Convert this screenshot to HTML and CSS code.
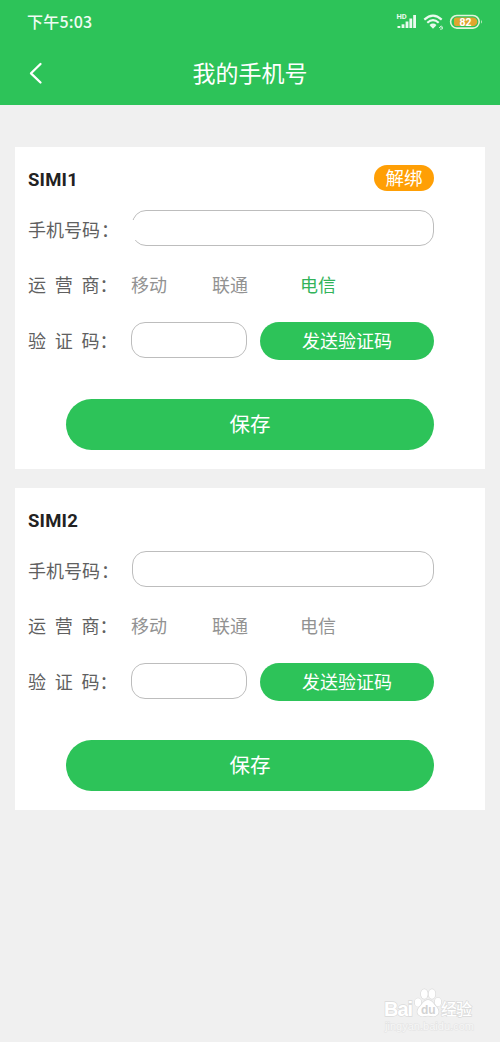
FILE: index.html
```html
<!DOCTYPE html>
<html lang="zh-CN">
<head>
<meta charset="utf-8">
<title>我的手机号</title>
<link rel="stylesheet" href="styles.css">
</head>
<body>
<header class="header">
  <div class="status">
    <span class="time">下午5:03</span>
    <svg class="status-icons" width="86" height="20" viewBox="0 0 86 20">
      <text class="hd" x="0.5" y="7">HD</text>
      <g fill="#eafaef">
        <rect x="1.5" y="14" width="2.8" height="2"/>
        <rect x="5.6" y="12.3" width="2.8" height="3.7"/>
        <rect x="9.6" y="9.5" width="2.8" height="6.5"/>
        <rect x="13.4" y="6.5" width="2.8" height="9.5"/>
        <rect x="17.2" y="3" width="2.8" height="13"/>
      </g>
      <g fill="none" stroke="#eafaef" stroke-width="2.1">
        <path d="M28.3 7.6Q37 -0.3 45.7 7.6"/>
        <path d="M31.3 10.8Q37 5.5 42.7 10.8"/>
        <path d="M34.2 13.8Q37 11.4 39.8 13.8"/>
      </g>
      <path d="M37 16.8l-2.4-2.6q2.4-1.8 4.8 0z" fill="#eafaef"/>
      <path d="M43 16l2.2-2.2v2.4M46.4 14.6v2.4l-2.4.2" fill="none" stroke="#c8f0d4" stroke-width="1"/>
      <rect x="54.6" y="3.5" width="28.6" height="12.6" rx="6.3" fill="none" stroke="#e2f5dc" stroke-width="1.6"/>
      <path d="M85 7.8q1.6 2 0 4z" fill="#e2f5dc"/>
      <path d="M60 5.5H77a4.3 4.3 0 0 1 0 8.6H60a2 2 0 0 1-2-2V7.5a2 2 0 0 1 2-2z" fill="#dfa52f"/>
      <text class="level" x="69.5" y="13.7">82</text>
    </svg>
  </div>
  <nav class="nav">
    <svg class="back" width="16" height="24" viewBox="0 0 16 24"><path d="M12.5 3L3 12.3L12.5 21.5" fill="none" stroke="#fff" stroke-width="2.3" stroke-linecap="round" stroke-linejoin="round"/></svg>
    <h1 class="title">我的手机号</h1>
  </nav>
</header>
<main class="cards">
  <section class="card">
    <div class="head"><h2 class="sim">SIMI1</h2><span class="unbind">解绑</span></div>
    <div class="row phone"><span class="label">手机号码<span class="colon">：</span></span><div class="field number open"></div></div>
    <div class="row carrier"><span class="label"><span class="spread">运营</span>商：</span><span class="option mobile">移动</span><span class="option unicom">联通</span><span class="option selected">电信</span></div>
    <div class="row code"><span class="label"><span class="spread">验证</span>码：</span><div class="field captcha"></div><div class="button send">发送验证码</div></div>
    <div class="button save">保存</div>
  </section>
  <section class="card">
    <div class="head"><h2 class="sim">SIMI2</h2></div>
    <div class="row phone"><span class="label">手机号码<span class="colon">：</span></span><div class="field number"></div></div>
    <div class="row carrier"><span class="label"><span class="spread">运营</span>商：</span><span class="option mobile">移动</span><span class="option unicom">联通</span><span class="option">电信</span></div>
    <div class="row code"><span class="label"><span class="spread">验证</span>码：</span><div class="field captcha"></div><div class="button send">发送验证码</div></div>
    <div class="button save">保存</div>
  </section>
</main>
<svg class="watermark" width="104" height="56" viewBox="0 0 104 56">
  <g class="mark">
    <text class="brand" x="2" y="32" textLength="29">Bai</text>
    <ellipse cx="36" cy="18.5" rx="3.2" ry="4.2"/>
    <ellipse cx="42.3" cy="10" rx="3.4" ry="4.8"/>
    <ellipse cx="50" cy="10" rx="3.4" ry="4.8"/>
    <ellipse cx="56" cy="18" rx="3.2" ry="4.2"/>
    <path d="M46 16c4 0 5.5 4 8 6.500s4.500 7.500-.5 9.500c-2.500 1-5-.3-7.500-.3s-5 1.300-7.500.3c-5-2-3-7-.5-9.500s4-6.500 8-6.500z"/>
    <text class="cjk" x="59" y="31" textLength="31">经验</text>
    <text class="url" x="3" y="46" textLength="89" lengthAdjust="spacingAndGlyphs">jingyan.baidu.com</text>
  </g>
  <text class="du" x="39" y="30">du</text>
</svg>
</body>
</html>
```

FILE: styles.css
```css
* { box-sizing: border-box; }
body {
  margin: 0;
  height: 1042px;
  position: relative;
  background: #f0f0f0;
  font-family: Roboto, "Noto Sans CJK SC", sans-serif;
}
.header {
  height: 105px;
  background: #2dc359;
  color: #fff;
}
.status {
  height: 44px;
  padding: 0 16px 0 27px;
  display: flex;
  align-items: center;
  justify-content: space-between;
}
.time {
  font: 500 16px/20px "Noto Sans CJK SC", sans-serif;
  letter-spacing: 0.2px;
  padding-bottom: 2px;
  color: #effcf3;
}
.status-icons { margin-right: 2px; overflow: visible; }
.hd { font: 700 7.5px Roboto, sans-serif; fill: #eafaef; }
.level { font: 700 10.5px Roboto, sans-serif; fill: #fff; text-anchor: middle; }
.nav {
  height: 58px;
  padding: 0 28px;
  display: grid;
  grid-template-columns: 16px 1fr 16px;
  align-items: center;
}
.title {
  margin: 0;
  font: 400 23px/32px "Noto Sans CJK SC", sans-serif;
  padding-bottom: 2px;
  text-align: center;
}
.cards {
  padding: 42px 15px 0;
  display: grid;
  gap: 19px;
}
.card {
  height: 322px;
  padding: 18px 51px 19px 13px;
  background: #fff;
}
.head {
  height: 26px;
  display: flex;
  align-items: center;
  justify-content: space-between;
}
.sim {
  margin: 3px 0 0;
  font: 700 18.5px/22px Roboto, sans-serif;
  letter-spacing: 0.2px;
  color: #222;
}
.unbind {
  width: 60px;
  height: 26px;
  border-radius: 13px;
  background: #ff9f05;
  color: #fff;
  font-size: 18.5px;
  line-height: 28px;
  text-align: center;
}
.row {
  display: flex;
  font-size: 18px;
  line-height: 28px;
}
.label {
  width: 103px;
  flex: none;
  color: #606060;
  white-space: nowrap;
}
.spread { letter-spacing: 8.7px; }
.colon { margin-left: 1px; }
.phone { height: 36px; margin-top: 19px; }
.phone .label { line-height: 41px; }
.carrier { height: 26px; margin-top: 26px; }
.code { height: 38px; margin-top: 24px; }
.code .label { line-height: 40px; }
.field {
  height: 36px;
  border: 1px solid #bdbdbd;
  border-radius: 14px;
  background: #fff;
}
.number { flex: 1; margin-left: 1px; position: relative; }
.open::before {
  content: "";
  position: absolute;
  left: -3px;
  top: 9px;
  width: 8px;
  height: 20px;
  background: #fff;
}
.captcha { width: 116px; }
.option { color: #929292; }
.mobile { width: 81px; }
.unicom { width: 88px; }
.selected { color: #32b35a; }
.button {
  background: #2dc359;
  color: #fff;
  text-align: center;
}
.send {
  width: 174px;
  height: 38px;
  margin-left: auto;
  border-radius: 19px;
  line-height: 40px;
}
.save {
  height: 51px;
  margin: 39px 0 0 38px;
  border-radius: 26px;
  font-size: 20.5px;
  line-height: 53px;
}
.watermark {
  position: absolute;
  left: 382px;
  top: 984px;
}
.mark { fill: #fff; stroke: #dadada; stroke-width: 1.3px; paint-order: stroke; }
.brand { font: 700 20px "Liberation Sans", sans-serif; }
.cjk { font: 500 16px "Noto Sans CJK SC", sans-serif; }
.url { font: 400 10px "Liberation Sans", sans-serif; fill: #f7f7f7; stroke: #e3e3e3; stroke-width: 1px; }
.du { font: 700 12px "Liberation Sans", sans-serif; fill: #d2d2d2; }
```
